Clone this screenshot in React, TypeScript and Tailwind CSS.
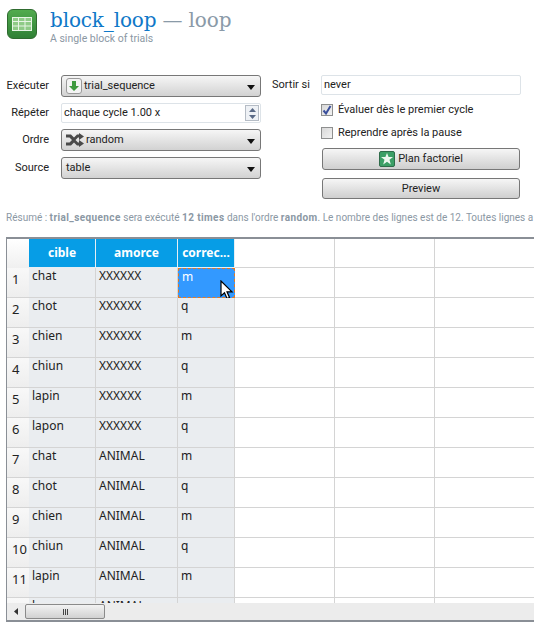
const uiFont = "font-['Roboto',sans-serif] text-[11px] text-[#222]";

const rows = [
  ['chat', 'XXXXXX', 'm'],
  ['chot', 'XXXXXX', 'q'],
  ['chien', 'XXXXXX', 'm'],
  ['chiun', 'XXXXXX', 'q'],
  ['lapin', 'XXXXXX', 'm'],
  ['lapon', 'XXXXXX', 'q'],
  ['chat', 'ANIMAL', 'm'],
  ['chot', 'ANIMAL', 'q'],
  ['chien', 'ANIMAL', 'm'],
  ['chiun', 'ANIMAL', 'q'],
  ['lapin', 'ANIMAL', 'm'],
  ['lapon', 'ANIMAL', 'q'],
];

const TableIcon = () => (
  <div className="flex h-[30px] w-[30px] shrink-0 items-center justify-center rounded-[6px] border border-[#2f6b2f] bg-gradient-to-b from-[#52ab4e] to-[#2f8035]">
    <svg width="20" height="14" viewBox="0 0 20 14" fill="none" stroke="#e8f5e6" strokeWidth="1">
      <rect x="0.5" y="0.5" width="19" height="13" fill="#8fcb87" />
      <path d="M0.5 4.5H19.5M0.5 9H19.5M6.5 0.5V13.5M13 0.5V13.5" />
    </svg>
  </div>
);

const ArrowIcon = () => (
  <div className="flex h-[16px] w-[16px] shrink-0 items-center justify-center rounded-[3px] border border-[#9a9a9a] bg-[#f4f4f4]">
    <svg width="10" height="10" viewBox="0 0 10 10">
      <path d="M3 0H7V5H10L5 10L0 5H3Z" fill="#3f9a3f" />
    </svg>
  </div>
);

const ShuffleIcon = () => (
  <svg width="18" height="14" viewBox="0 0 18 14" className="shrink-0">
    <path
      d="M0 1.5H5L8 4.5L11 1.5H13V0L18 3.5L13 7V4.5H12L9.5 7L12 9.5H13V7L18 10.5L13 14V12.5H11L8 9.5L5 12.5H0V9.5H3.5L6 7L3.5 4.5H0Z"
      fill="#4a4a4a"
    />
  </svg>
);

const StarIcon = () => (
  <div className="flex h-[16px] w-[16px] shrink-0 items-center justify-center rounded-[2px] border border-[#2f6b4a] bg-[#3c9f66]">
    <svg width="12" height="12" viewBox="0 0 12 12">
      <path d="M6 0L7.6 4H12L8.5 6.7L9.8 11.5L6 8.7L2.2 11.5L3.5 6.7L0 4H4.4Z" fill="#eef7f0" />
    </svg>
  </div>
);

const Caret = () => (
  <svg width="8" height="5" viewBox="0 0 8 5" className="absolute right-[5px] top-[9px]">
    <path d="M0 0H8L4 5Z" fill="#111" />
  </svg>
);

const Select = ({ children, className = '' }: { children: React.ReactNode; className?: string }) => (
  <div className={`relative flex h-[22px] w-[200px] items-center gap-[2px] rounded-[3px] border border-[#777] bg-gradient-to-b from-[#f6f6f6] to-[#d2d2d2] pl-[4px] ${className}`}>
    {children}
    <Caret />
  </div>
);

const Label = ({ children }: { children: React.ReactNode }) => (
  <div className="w-[48px] shrink-0 pt-px text-right">{children}</div>
);

const Button = ({ children, className = '' }: { children: React.ReactNode; className?: string }) => (
  <div className={`flex w-[198px] items-center justify-center gap-[3px] rounded-[3px] border border-[#777] bg-gradient-to-b from-[#f6f6f6] to-[#cfcfcf] ${className}`}>
    {children}
  </div>
);

const Checkbox = ({ checked, label }: { checked?: boolean; label: string }) => (
  <div className="flex h-[14px] items-center gap-[5px]">
    <div className="flex h-[12px] w-[12px] items-center justify-center border border-[#8e8f8f] bg-gradient-to-br from-[#d8d8d8] to-[#f2f2f2]">
      {checked && (
        <svg width="10" height="10" viewBox="0 0 10 10">
          <path d="M1.5 5.5L4 8.5L8.5 1" fill="none" stroke="#3a4f9c" strokeWidth="2" />
        </svg>
      )}
    </div>
    <span className="pt-px">{label}</span>
  </div>
);

const Cursor = () => (
  <svg width="14" height="20" viewBox="0 0 14 20" className="absolute left-[41px] top-[11px]">
    <path d="M1 1V16L4.5 12.8L7 18.5L9.5 17.5L7 11.8H12Z" fill="#fff" stroke="#000" strokeWidth="1.2" />
  </svg>
);

export default function App() {
  return (
    <div className={`h-[632px] w-[534px] overflow-hidden bg-white ${uiFont}`}>
      {/* En-tête */}
      <div className="flex h-[75px] gap-[13px] pl-[7px] pt-[9px]">
        <TableIcon />
        <div>
          <div className="whitespace-nowrap font-['DejaVu_Serif',serif] text-[20px] leading-[22px] tracking-[-0.15px]">
            <span className="text-[#0f78c8]">block_loop</span>
            <span className="text-[#8a9aa8]"> — loop</span>
          </div>
          <div className="mt-[1px] text-[10.5px] leading-[14px] text-[#8b98a4]">A single block of trials</div>
        </div>
      </div>

      {/* Formulaire */}
      <div className="flex gap-[11px] pl-[1px]">
        <div className="flex flex-col">
          <div className="flex h-[22px] items-center gap-[12px]">
            <Label>Exécuter</Label>
            <Select>
              <ArrowIcon />
              <span className="pt-px">trial_sequence</span>
            </Select>
          </div>
          <div className="mt-[6px] flex h-[20px] items-center gap-[12px]">
            <Label>Répéter</Label>
            <div className="relative flex h-[20px] w-[200px] items-center rounded-[2px] border border-[#dde3e8] pl-[2px]">
              <span className="pt-px">chaque cycle 1.00 x</span>
              <div className="absolute right-[1px] top-[1px] flex h-[16px] w-[14px] flex-col items-center justify-around border border-[#b5bcc5] bg-[#eef1f5]">
                <svg width="7" height="4" viewBox="0 0 7 4"><path d="M0 4L3.5 0L7 4Z" fill="#5a6a86" /></svg>
                <svg width="7" height="4" viewBox="0 0 7 4"><path d="M0 0L3.5 4L7 0Z" fill="#5a6a86" /></svg>
              </div>
            </div>
          </div>
          <div className="mt-[6px] flex h-[22px] items-center gap-[12px]">
            <Label>Ordre</Label>
            <Select>
              <ShuffleIcon />
              <span className="pt-px">random</span>
            </Select>
          </div>
          <div className="mt-[6px] flex h-[22px] items-center gap-[12px]">
            <Label>Source</Label>
            <Select className="pl-[3px]">
              <span className="pt-px">table</span>
            </Select>
          </div>
        </div>

        <div className="flex flex-col">
          <div className="flex h-[20px] items-center gap-[12px]">
            <div className="w-[37px] shrink-0 whitespace-nowrap pt-px">Sortir si</div>
            <div className="flex h-[20px] w-[200px] items-center rounded-[2px] border border-[#dde3e8] pl-[2px] pt-px">never</div>
          </div>
          <div className="ml-[49px] mt-[8px] flex flex-col gap-[9px]">
            <Checkbox checked label="Évaluer dès le premier cycle" />
            <Checkbox label="Reprendre après la pause" />
          </div>
          <Button className="ml-[50px] mt-[8px] h-[22px]">
            <StarIcon />
            <span className="pt-px">Plan factoriel</span>
          </Button>
          <Button className="ml-[50px] mt-[8px] h-[21px] pt-px">Preview</Button>
        </div>
      </div>

      {/* Résumé */}
      <div className="mt-[12px] h-[14px] overflow-hidden whitespace-nowrap pl-[6px] text-[10px] leading-[14px] text-[#8b98a4]">
        Résumé : <b className="tracking-[0.4px]">trial_sequence</b> sera exécuté <b className="tracking-[0.4px]">12 times</b> dans l'ordre <b className="tracking-[0.4px]">random</b>. Le nombre des lignes est de 12. Toutes lignes a
      </div>

      {/* Tableau */}
      <div className="ml-[6px] mt-[12px] border-b-2 border-l border-t-2 border-[#8a8f96] font-['Noto_Sans',sans-serif] text-[12px]">
        <div className="h-[364px] overflow-hidden">
          <div className="flex h-[29px]">
            <div className="w-[22px] shrink-0 bg-gradient-to-b from-white to-[#f0f0f0]" />
            <HeaderCell className="w-[67px]">cible</HeaderCell>
            <HeaderCell className="w-[82px]">amorce</HeaderCell>
            <HeaderCell className="w-[57px]">correc...</HeaderCell>
            <div className="w-[100px] shrink-0 border-b border-r border-[#d4d4d4]" />
            <div className="w-[100px] shrink-0 border-b border-r border-[#d4d4d4]" />
            <div className="flex-1 border-b border-[#d4d4d4]" />
          </div>
          {rows.map((row, i) => (
            <div key={i} className="flex h-[30px]">
              <div className="flex w-[22px] shrink-0 items-center border-b border-[#d4d4d4] bg-gradient-to-b from-[#f8f8f8] to-[#eeeeee] pb-[6px] pl-[5px] text-[13px] text-[#222]">
                {i + 1}
              </div>
              <DataCell className="w-[67px]">{row[0]}</DataCell>
              <DataCell className="w-[82px]">{row[1]}</DataCell>
              <DataCell className="relative w-[57px]" selected={i === 0}>
                {row[2]}
                {i === 0 && <Cursor />}
              </DataCell>
              <div className="w-[100px] shrink-0 border-b border-r border-[#d4d4d4]" />
              <div className="w-[100px] shrink-0 border-b border-r border-[#d4d4d4]" />
              <div className="flex-1 border-b border-[#d4d4d4]" />
            </div>
          ))}
        </div>
        {/* Barre de défilement */}
        <div className="flex h-[17px] items-center bg-[#ececec] pl-[7px]">
          <svg width="4" height="7" viewBox="0 0 4 7"><path d="M4 0V7L0 3.5Z" fill="#333" /></svg>
          <div className="ml-[7px] flex h-[15px] w-[80px] items-center justify-center gap-[1px] rounded-[2px] border border-[#8a8a8a] bg-gradient-to-b from-[#f2f2f2] to-[#d2d2d2]">
            <span className="h-[6px] w-[1px] bg-[#444]" />
            <span className="h-[6px] w-[1px] bg-[#444]" />
            <span className="h-[6px] w-[1px] bg-[#444]" />
          </div>
        </div>
      </div>
    </div>
  );
}

function HeaderCell({ children, className = '' }: { children: React.ReactNode; className?: string }) {
  return (
    <div className={`flex shrink-0 items-center justify-center border-b border-r border-[#e6eef4] bg-[#069de6] font-bold text-white ${className}`}>
      {children}
    </div>
  );
}

function DataCell({
  children,
  className = '',
  selected,
}: {
  children: React.ReactNode;
  className?: string;
  selected?: boolean;
}) {
  return (
    <div
      className={`shrink-0 pl-[3px] leading-[16px] ${
        selected
          ? 'border border-dashed border-[#e8781e] bg-[#3399ff] text-white'
          : 'border-b border-r border-[#d4d4d4] bg-[#eaedf0]'
      } ${className}`}
    >
      {children}
    </div>
  );
}
